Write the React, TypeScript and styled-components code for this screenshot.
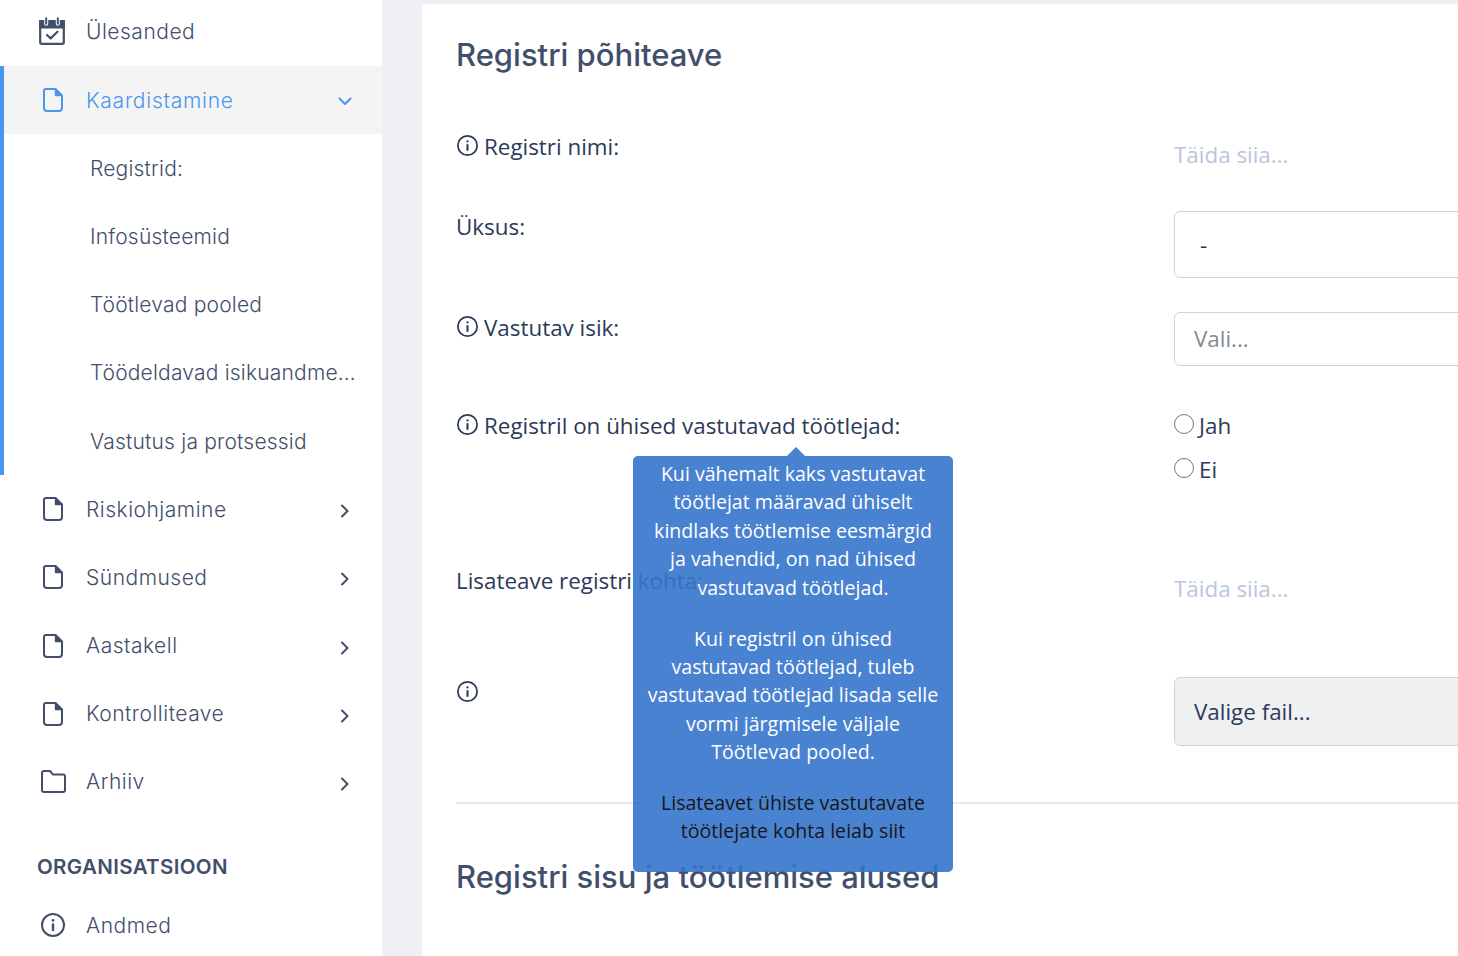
import styled, { createGlobalStyle } from 'styled-components';

const GlobalStyle = createGlobalStyle`
  html, body {
    margin: 0;
    padding: 0;
    overflow: hidden;
    background: #eff0f5;
  }
  * {
    box-sizing: border-box;
  }
`;

const Page = styled.div`
  display: flex;
  width: 1458px;
  height: 956px;
  overflow: hidden;
  background: #eff0f5;
`;

const Sidebar = styled.nav`
  width: 382px;
  flex-shrink: 0;
  background: #fff;
  font-family: Inter, 'Noto Sans', sans-serif;
  font-size: 21px;
  font-weight: 300;
  letter-spacing: 0.5px;
  color: #424e6a;
`;

const MenuRow = styled.div<{ $active?: boolean; $height?: number; $lift?: number }>`
  display: flex;
  align-items: center;
  height: ${(p) => p.$height ?? 68.2}px;
  padding: 0 30px ${(p) => p.$lift ?? 0}px 41px;
  background: ${(p) => (p.$active ? '#f4f4f5' : 'transparent')};
  color: ${(p) => (p.$active ? '#4a96ee' : 'inherit')};
  letter-spacing: ${(p) => (p.$active ? '0.75px' : 'inherit')};
`;

const ActiveGroup = styled.div`
  border-left: 4px solid #4a96ee;

  ${MenuRow} {
    padding-left: 37px;
  }
`;

const IconSlot = styled.span`
  display: flex;
  justify-content: center;
  align-items: center;
  width: 24px;
  margin-right: 21px;
  flex-shrink: 0;

  svg {
    flex-shrink: 0;
  }
`;

const CalendarMark = styled.span`
  display: flex;
  margin-right: 3px;
`;

const MenuLabel = styled.span`
  flex: 1;
`;

const SubRow = styled.div`
  display: flex;
  align-items: center;
  height: 68.2px;
  padding: 0 20px 0 86px;
  letter-spacing: 0.2px;
  white-space: nowrap;
  overflow: hidden;
`;

const SectionLabel = styled.div`
  margin: 31px 0 0 37px;
  height: 44px;
  line-height: 40px;
  font-weight: 600;
  font-size: 20.5px;
  letter-spacing: 0.35px;
`;

const ChevronBox = styled.span<{ $open?: boolean }>`
  display: flex;
  margin-top: ${(p) => (p.$open ? 2 : 4)}px;
`;

const Main = styled.main`
  position: relative;
  flex: 1;
  margin: 4px 0 0 40px;
  padding-left: 34px;
  background: #fff;
  overflow: hidden;
  font-family: 'Open Sans', sans-serif;
  font-size: 22.4px;
  color: #2c3a59;
`;

const Heading = styled.h2<{ $height: number; $lift?: number }>`
  display: flex;
  align-items: center;
  height: ${(p) => p.$height}px;
  margin: 0;
  padding-bottom: ${(p) => p.$lift ?? 0}px;
  font-family: Inter, 'Noto Sans', sans-serif;
  font-size: 31px;
  font-weight: 500;
  color: #424e6a;
`;

const FormRow = styled.div<{ $height: number }>`
  display: grid;
  grid-template-columns: 718px 600px;
  height: ${(p) => p.$height}px;
`;

const Label = styled.div<{ $offset?: number }>`
  display: flex;
  align-items: center;
  height: 30px;
  line-height: 30px;
  margin-top: ${(p) => p.$offset ?? 0}px;
`;

const InfoMark = styled.span`
  display: flex;
  margin: 0 6px 4px 1px;
`;

const Placeholder = styled.div<{ $offset: number }>`
  height: 30px;
  line-height: 30px;
  margin-top: ${(p) => p.$offset}px;
  color: #b9c6dc;
`;

const Field = styled.div<{ $height: number; $muted?: boolean; $filled?: boolean }>`
  display: flex;
  align-items: center;
  height: ${(p) => p.$height}px;
  padding: 0 20px ${(p) => (p.$muted ? 2 : 0)}px 19px;
  border: 1px solid ${(p) => (p.$muted ? '#cfd2d6' : '#ccd4e2')};
  border-radius: 6px;
  background: ${(p) => (p.$filled ? '#eff0f2' : '#fff')};
  color: ${(p) => (p.$muted ? '#858a91' : 'inherit')};
`;

const DashField = styled(Field)`
  padding-left: 25px;
`;

const RadioList = styled.div`
  display: flex;
  flex-direction: column;
  gap: 14px;
  margin-top: -1px;
`;

const RadioLabel = styled.label`
  display: flex;
  align-items: center;
  gap: 5px;
  height: 30px;
`;

const Radio = styled.input`
  width: 20px;
  height: 20px;
  margin: 0 0 2px;
`;

const Divider = styled.hr`
  height: 2px;
  margin: 0;
  border: 0;
  background: #e8e9ec;
`;

const Tooltip = styled.div`
  position: absolute;
  left: 211px;
  top: 452px;
  width: 320px;
  height: 416px;
  padding: 4px 12px 0;
  border-radius: 5px;
  background: #3675cb;
  opacity: 0.9;
  color: #fff;
  font-size: 19.6px;
  line-height: 28.4px;
  text-align: center;

  &::before {
    content: '';
    position: absolute;
    top: -9px;
    left: 154px;
    border-left: 9px solid transparent;
    border-right: 9px solid transparent;
    border-bottom: 9px solid #3675cb;
  }
`;

const TooltipText = styled.p<{ $dark?: boolean }>`
  margin: 0 0 22.5px;
  color: ${(p) => (p.$dark ? '#000' : '#fff')};
`;

function CalendarIcon() {
  return (
    <CalendarMark>
      <svg width="26" height="28" viewBox="0 0 26 28" fill="none" stroke="#424e6a" strokeWidth="2.2">
        <rect x="1.2" y="4" width="23.6" height="22.8" rx="1.5" />
        <path d="M1.2 4h23.6v6.5H1.2z" fill="#424e6a" />
        <path d="M7.2 1.2v5.6M18.8 1.2v5.6" strokeLinecap="round" stroke="#fff" strokeWidth="4" />
        <path d="M7.2 1.2v5.6M18.8 1.2v5.6" strokeLinecap="round" stroke="#424e6a" strokeWidth="2" />
        <path d="M8 18l3.6 3.4L18.5 14.8" strokeLinecap="round" strokeLinejoin="round" />
      </svg>
    </CalendarMark>
  );
}

function FileIcon({ color = '#424e6a' }: { color?: string }) {
  return (
    <svg width="20" height="24" viewBox="0 0 20 24" fill="none" stroke={color} strokeWidth="2" strokeLinejoin="round">
      <path d="M3 1h9.5L19 7.5V20a3 3 0 0 1-3 3H4a3 3 0 0 1-3-3V3a2 2 0 0 1 2-2z" />
      <path d="M12.5 1v6.5H19z" fill={color} strokeWidth="1.4" />
    </svg>
  );
}

function FolderIcon() {
  return (
    <svg width="25" height="23" viewBox="0 0 25 23" fill="none" stroke="#424e6a" strokeWidth="2" strokeLinejoin="round">
      <path d="M1 3a2 2 0 0 1 2-2h6l3 3.6h10a2 2 0 0 1 2 2V20a2 2 0 0 1-2 2H3a2 2 0 0 1-2-2z" />
    </svg>
  );
}

function InfoIcon({ size = 24, color = '#424e6a' }: { size?: number; color?: string }) {
  return (
    <svg width={size} height={size} viewBox="0 0 24 24" fill="none" stroke={color} strokeWidth="2" strokeLinecap="round">
      <circle cx="12" cy="12" r="11" />
      <path d="M12 11.5v5.5" strokeWidth="2.4" />
      <circle cx="12" cy="7.4" r="1.3" fill={color} stroke="none" />
    </svg>
  );
}

function Chevron({ open = false, color = '#424e6a' }: { open?: boolean; color?: string }) {
  return (
    <ChevronBox $open={open}>
      <svg width="14" height="14" viewBox="0 0 14 14" fill="none" stroke={color} strokeWidth="2" strokeLinecap="round" strokeLinejoin="round">
        {open ? <path d="M1.5 4.5L7 10l5.5-5.5" /> : <path d="M4 1.5L9.5 7 4 12.5" />}
      </svg>
    </ChevronBox>
  );
}

function FormInfo() {
  return (
    <InfoMark>
      <InfoIcon size={21} color="#2c3a59" />
    </InfoMark>
  );
}

const SUB_ITEMS = [
  'Registrid:',
  'Infosüsteemid',
  'Töötlevad pooled',
  'Töödeldavad isikuandme…',
  'Vastutus ja protsessid',
];

const FILE_ITEMS = ['Riskiohjamine', 'Sündmused', 'Aastakell', 'Kontrolliteave'];

export default function App() {
  return (
    <Page>
      <GlobalStyle />
      <Sidebar>
        <MenuRow $height={66} $lift={4}>
          <IconSlot>
            <CalendarIcon />
          </IconSlot>
          <MenuLabel>Ülesanded</MenuLabel>
        </MenuRow>
        <ActiveGroup>
          <MenuRow $active>
            <IconSlot>
              <FileIcon color="#4a96ee" />
            </IconSlot>
            <MenuLabel>Kaardistamine</MenuLabel>
            <Chevron open color="#4a96ee" />
          </MenuRow>
          {SUB_ITEMS.map((item) => (
            <SubRow key={item}>{item}</SubRow>
          ))}
        </ActiveGroup>
        {FILE_ITEMS.map((item) => (
          <MenuRow key={item}>
            <IconSlot>
              <FileIcon />
            </IconSlot>
            <MenuLabel>{item}</MenuLabel>
            <Chevron />
          </MenuRow>
        ))}
        <MenuRow>
          <IconSlot>
            <FolderIcon />
          </IconSlot>
          <MenuLabel>Arhiiv</MenuLabel>
          <Chevron />
        </MenuRow>
        <SectionLabel>ORGANISATSIOON</SectionLabel>
        <MenuRow>
          <IconSlot>
            <InfoIcon />
          </IconSlot>
          <MenuLabel>Andmed</MenuLabel>
        </MenuRow>
      </Sidebar>
      <Main>
        <Heading $height={124} $lift={24}>
          Registri põhiteave
        </Heading>
        <FormRow $height={83}>
          <Label $offset={4}>
            <FormInfo />
            Registri nimi:
          </Label>
          <Placeholder $offset={12}>Täida siia...</Placeholder>
        </FormRow>
        <FormRow $height={101}>
          <Label $offset={1}>Üksus:</Label>
          <DashField $height={67}>-</DashField>
        </FormRow>
        <FormRow $height={99}>
          <Label $offset={1}>
            <FormInfo />
            Vastutav isik:
          </Label>
          <Field $height={54} $muted>
            Vali...
          </Field>
        </FormRow>
        <FormRow $height={155}>
          <Label>
            <FormInfo />
            Registril on ühised vastutavad töötlejad:
          </Label>
          <RadioList>
            <RadioLabel>
              <Radio type="radio" name="joint" />
              Jah
            </RadioLabel>
            <RadioLabel>
              <Radio type="radio" name="joint" />
              Ei
            </RadioLabel>
          </RadioList>
        </FormRow>
        <FormRow $height={111}>
          <Label>Lisateave registri kohta:</Label>
          <Placeholder $offset={8}>Täida siia...</Placeholder>
        </FormRow>
        <FormRow $height={125}>
          <Label $offset={1}>
            <FormInfo />
          </Label>
          <Field $height={69} $filled>
            Valige fail...
          </Field>
        </FormRow>
        <Divider />
        <Heading $height={146} $lift={2}>
          Registri sisu ja töötlemise alused
        </Heading>
        <Tooltip>
          <TooltipText>
            Kui vähemalt kaks vastutavat töötlejat määravad ühiselt kindlaks töötlemise eesmärgid ja vahendid, on nad
            ühised vastutavad töötlejad.
          </TooltipText>
          <TooltipText>
            Kui registril on ühised vastutavad töötlejad, tuleb vastutavad töötlejad lisada selle vormi järgmisele
            väljale Töötlevad pooled.
          </TooltipText>
          <TooltipText $dark>Lisateavet ühiste vastutavate töötlejate kohta leiab siit</TooltipText>
        </Tooltip>
      </Main>
    </Page>
  );
}
